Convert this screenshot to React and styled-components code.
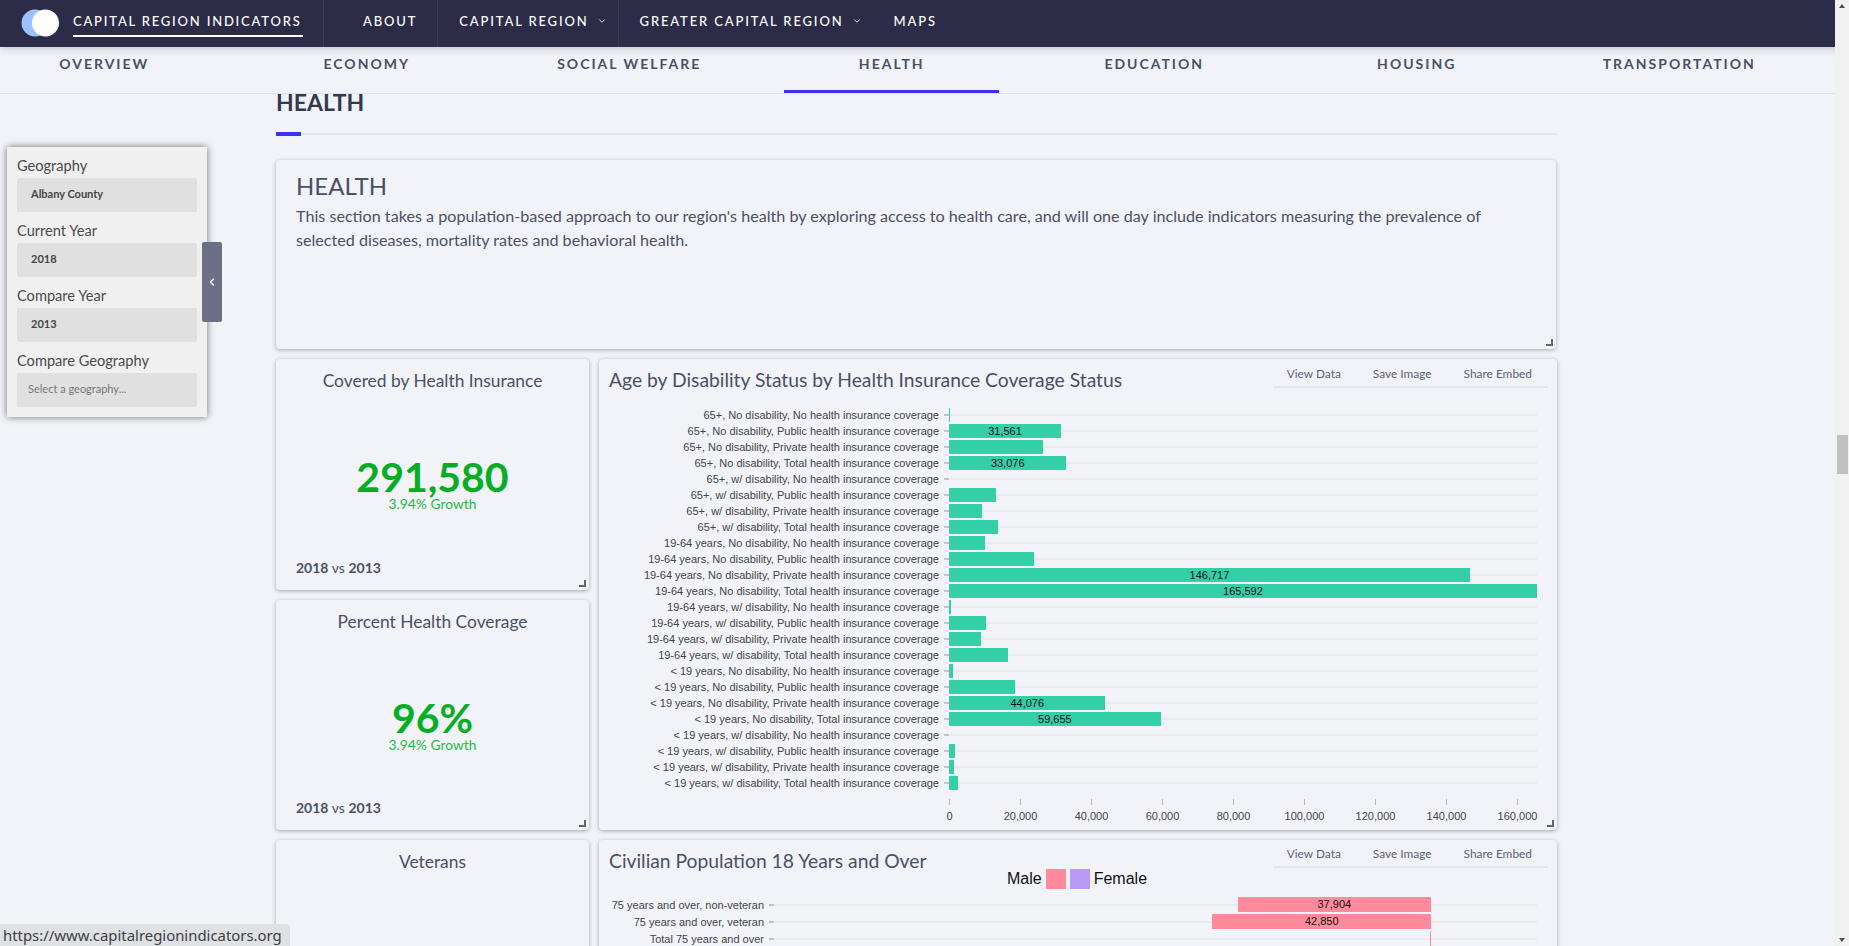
import styled, { createGlobalStyle } from "styled-components";
import { ChevronDown, ChevronLeft } from "lucide-react";

const GlobalStyle = createGlobalStyle`
  html, body {
    margin: 0;
    padding: 0;
    height: 100%;
    overflow: hidden;
    background: #f1f3f9;
    font-family: Lato, "Open Sans", sans-serif;
  }
  * { box-sizing: border-box; }
`;

const Page = styled.div`
  position: relative;
  width: 1849px;
  height: 946px;
  overflow: hidden;
  display: flex;
  flex-direction: column;
  color: #4a5064;
`;

const TopNav = styled.nav`
  height: 47px;
  flex: none;
  display: flex;
  background: #2c2c48;
  color: #fff;
  position: relative;
  z-index: 3;
  box-shadow: 0 2px 8px rgba(0, 0, 0, 0.18);
`;

const Logo = styled.svg`
  width: 38px;
  height: 28px;
  margin: 9px 0 0 21px;
  flex: none;
`;

const Brand = styled.div`
  margin: 0 20px 0 14px;
  width: 230px;
  height: 37px;
  line-height: 43px;
  border-bottom: 2px solid #fff;
  font-size: 13px;
  font-weight: 500;
  letter-spacing: 1.8px;
  white-space: nowrap;
`;

const NavItem = styled.div`
  height: 47px;
  display: flex;
  align-items: center;
  gap: 8px;
  padding: 0 ${(p) => p.$right}px 5px ${(p) => p.$left}px;
  border-left: ${(p) => (p.$plain ? "none" : "1px solid rgba(255, 255, 255, 0.07)")};
  font-size: 13px;
  font-weight: 500;
  letter-spacing: 1.85px;
  white-space: nowrap;
`;

const SubNav = styled.div`
  height: 47px;
  flex: none;
  display: flex;
  margin-left: -27px;
  width: 1862px;
  overflow: hidden;
  border-bottom: 1px solid #dfe1e9;
`;

const Tab = styled.div`
  width: 215px;
  margin: 0 23.75px;
  height: 47px;
  flex: none;
  padding-top: 7px;
  line-height: 20px;
  text-align: center;
  font-size: 14px;
  font-weight: 700;
  letter-spacing: 2px;
  color: #4a5064;
  border-bottom: 4px solid ${(p) => (p.$active ? "#3a32f0" : "transparent")};
`;

const Main = styled.main`
  flex: 1;
  min-height: 0;
  overflow: hidden;
  padding-left: 276px;
`;

const Content = styled.div`
  width: 1281px;
`;

const SectionTitle = styled.h2`
  margin: 0;
  height: 16px;
  line-height: 16px;
  font-size: 23px;
  font-weight: 700;
  color: #34394f;
`;

const SectionRule = styled.div`
  height: 4px;
  margin: 22px 0 24px;
  background:
    linear-gradient(#3a32f0, #3a32f0) left top / 25px 4px no-repeat,
    linear-gradient(#e3e5ec, #e3e5ec) left 1px / 100% 2px no-repeat;
`;

const CardGrid = styled.div`
  display: grid;
  grid-template-columns: 313px 958px;
  grid-template-rows: 189px 231px 230px 200px;
  gap: 10px;
`;

const Card = styled.section`
  position: relative;
  background: #f1f3f9;
  border-radius: 4px;
  box-shadow: 0 1px 4px rgba(0, 0, 0, 0.32);

  &::after {
    content: "";
    position: absolute;
    right: 3px;
    bottom: 3px;
    width: 5px;
    height: 5px;
    border-right: 2px solid #666;
    border-bottom: 2px solid #666;
  }
`;

const IntroCard = styled(Card)`
  grid-column: 1 / 3;
  width: 1280px;
  padding: 12px 20px;
`;

const IntroTitle = styled.h3`
  margin: 0;
  font-size: 24px;
  line-height: 28px;
  font-weight: 400;
  color: #4a5064;
`;

const IntroText = styled.p`
  margin: 4px 0 0;
  font-size: 16.15px;
  line-height: 24px;
  color: #4a5064;
`;

const StatCard = styled(Card)`
  display: flex;
  flex-direction: column;
  align-items: center;
  text-align: center;
`;

const StatTitle = styled.h3`
  margin: 10px 0 0;
  font-size: 17.4px;
  line-height: 24px;
  font-weight: 400;
  color: #4a5064;
`;

const StatValue = styled.div`
  margin-top: 66px;
  font-size: 41px;
  line-height: 36px;
  font-weight: 700;
  color: #05ae22;
`;

const StatGrowth = styled.div`
  font-size: 13.8px;
  line-height: 18px;
  color: #1fbb3c;
`;

const StatFoot = styled.div`
  margin-top: auto;
  margin-bottom: 13px;
  align-self: flex-start;
  margin-left: 20px;
  font-size: 14px;
  line-height: 18px;
  color: #4a5064;

  b {
    font-weight: 700;
  }
`;

const ChartCard = styled(Card)`
  grid-column: 2;
  grid-row: ${(p) => p.$row};
  padding-top: 10px;
`;

const ChartTitle = styled.h3`
  position: absolute;
  left: 10px;
  top: 9px;
  margin: 0;
  font-size: 19.3px;
  line-height: 24px;
  font-weight: 400;
  color: #4a5064;
`;

const Toolbar = styled.div`
  display: flex;
  justify-content: flex-end;
  margin: 0 9px 0 auto;
  width: 275px;
  height: ${(p) => p.$h}px;
  border-bottom: 2px solid #e3e5ec;
  font-size: 11.9px;
  color: #5c6175;
`;

const ToolButton = styled.div`
  padding: 0 16px 9px;
  height: 100%;
  display: flex;
  align-items: center;
  white-space: nowrap;
`;

const ChartBody = styled.div`
  padding-top: ${(p) => p.$top}px;
`;

const ChartRow = styled.div`
  display: grid;
  grid-template-columns: ${(p) => p.$label}px 5px ${(p) => p.$track}px;
  height: ${(p) => p.$h}px;
  align-items: center;
  font-family: "Liberation Sans", Arial, sans-serif;
  font-size: 11px;
`;

const RowLabel = styled.div`
  text-align: right;
  padding-right: 5px;
  color: #444;
  white-space: nowrap;
`;

const RowTick = styled.div`
  height: 2px;
  background: #c4c4c8;
`;

const Track = styled.div`
  display: flex;
  align-items: center;
  height: 100%;
  background: linear-gradient(#e9e9ee, #e9e9ee) center / 100% 2px no-repeat;
`;

const Bar = styled.div`
  flex: none;
  height: ${(p) => p.$h}px;
  background: ${(p) => p.$color};
  color: #111;
  text-align: center;
  line-height: ${(p) => p.$h}px;
  font-size: 11px;
  overflow: hidden;
`;

const Axis = styled.div`
  display: flex;
  margin: 8px 0 0 ${(p) => p.$left}px;
  font-family: "Liberation Sans", Arial, sans-serif;
  font-size: 11px;
  color: #444;
`;

const AxisTick = styled.div`
  width: 71px;
  flex: none;
  text-align: center;

  &::before {
    content: "";
    display: block;
    width: 1px;
    height: 6px;
    margin: 0 auto 5px;
    background: #b8b8bc;
  }
`;

const Legend = styled.div`
  display: flex;
  align-items: center;
  gap: 4px;
  margin: 1px 0 0 408px;
  height: 20px;
  font-family: "Liberation Sans", Arial, sans-serif;
  font-size: 16px;
  color: #111;
`;

const Swatch = styled.span`
  width: 20px;
  height: 20px;
  background: ${(p) => p.$color};
`;

const Sidebar = styled.aside`
  position: absolute;
  left: 7px;
  top: 147px;
  width: 200px;
  padding: 0 10px 10px;
  background: #f0f0f0;
  box-shadow: 0 0 7px rgba(0, 0, 0, 0.55);
  z-index: 2;
`;

const FieldLabel = styled.div`
  padding: 8px 0 2px;
  line-height: 21px;
  font-size: 14.6px;
  color: #4a4a4a;
`;

const SelectBox = styled.div`
  height: 34px;
  line-height: 32px;
  padding-left: ${(p) => (p.$placeholder ? 11 : 14)}px;
  border-radius: 2px;
  background: #e0e0e0;
  font-size: 11px;
  font-weight: ${(p) => (p.$placeholder ? 400 : 700)};
  color: ${(p) => (p.$placeholder ? "#777" : "#444")};
`;

const SidebarToggle = styled.div`
  position: absolute;
  left: 195px;
  top: 95px;
  width: 20px;
  height: 80px;
  display: flex;
  align-items: center;
  justify-content: center;
  background: #6b7088;
  border-radius: 2px;
  color: #fff;
`;

const ScrollTrack = styled.div`
  position: absolute;
  right: 0;
  top: 0;
  bottom: 0;
  width: 14px;
  background: #f1f1f1;
  z-index: 4;
`;

const ScrollThumb = styled.div`
  position: absolute;
  top: 435px;
  left: 2px;
  width: 11px;
  height: 39px;
  background: #c1c1c1;
`;

const ScrollArrow = styled.div`
  position: absolute;
  left: 4px;
  ${(p) => (p.$down ? "bottom: 4px;" : "top: 4px;")}
  width: 0;
  height: 0;
  border-left: 3.5px solid transparent;
  border-right: 3.5px solid transparent;
  ${(p) => (p.$down ? "border-top" : "border-bottom")}: 4px solid #505050;
`;

const StatusBubble = styled.div`
  position: absolute;
  left: 0;
  bottom: 0;
  width: 290px;
  height: 22px;
  padding-left: 3px;
  line-height: 22px;
  background: #dfe1e5;
  border-top-right-radius: 4px;
  font-family: "Noto Sans", sans-serif;
  font-size: 14.9px;
  color: #3c4043;
  white-space: nowrap;
  z-index: 5;
`;

const navItems = [
  { label: "ABOUT", left: 39, right: 20 },
  { label: "CAPITAL REGION", left: 21, right: 11, menu: true },
  { label: "GREATER CAPITAL REGION", left: 21, right: 11, menu: true },
  { label: "MAPS", left: 21, right: 20, plain: true },
];

const tabs = ["OVERVIEW", "ECONOMY", "SOCIAL WELFARE", "HEALTH", "EDUCATION", "HOUSING", "TRANSPORTATION"];

const coverage = ["No health insurance coverage", "Public health insurance coverage", "Private health insurance coverage", "Total health insurance coverage"];

const ageValues = [
  ["65+, No disability", [400, 31561, 26600, 33076]],
  ["65+, w/ disability", [0, 13300, 9300, 13700]],
  ["19-64 years, No disability", [10000, 24000, 146717, 165592]],
  ["19-64 years, w/ disability", [600, 10300, 9000, 16700]],
  ["< 19 years, No disability", [1100, 18700, 44076, 59655]],
  ["< 19 years, w/ disability", [0, 1700, 1500, 2600]],
];

const ageRows = ageValues.flatMap(([group, values]) =>
  values.map((value, i) => ({
    // the source chart really does drop "health" from this one label
    label:
      group === "< 19 years, No disability" && i === 3
        ? `${group}, Total insurance coverage`
        : `${group}, ${coverage[i]}`,
    value,
  }))
);

const ticks = [0, 20000, 40000, 60000, 80000, 100000, 120000, 140000, 160000];

const veteranRows = [
  { label: "75 years and over, non-veteran", value: 37904 },
  { label: "75 years and over, veteran", value: 42850 },
  { label: "Total 75 years and over", value: 200, hide: true },
];

const ChartTools = ({ height }) => (
  <Toolbar $h={height}>
    <ToolButton>View Data</ToolButton>
    <ToolButton>Save Image</ToolButton>
    <ToolButton>Share Embed</ToolButton>
  </Toolbar>
);

const Stat = ({ title, value }) => (
  <StatCard>
    <StatTitle>{title}</StatTitle>
    <StatValue>{value}</StatValue>
    <StatGrowth>3.94% Growth</StatGrowth>
    <StatFoot>
      <b>2018</b> vs <b>2013</b>
    </StatFoot>
  </StatCard>
);

export default function App() {
  return (
    <Page>
      <GlobalStyle />
      <TopNav>
        <Logo viewBox="0 0 38 28">
          <circle cx="14" cy="14" r="13.5" fill="#9cc3ff" />
          <circle cx="24.5" cy="14" r="13.5" fill="#fff" />
        </Logo>
        <Brand>CAPITAL REGION INDICATORS</Brand>
        {navItems.map((item) => (
          <NavItem key={item.label} $left={item.left} $right={item.right} $plain={item.plain}>
            {item.label}
            {item.menu && <ChevronDown size={10} strokeWidth={2} />}
          </NavItem>
        ))}
      </TopNav>
      <SubNav>
        {tabs.map((tab) => (
          <Tab key={tab} $active={tab === "HEALTH"}>
            {tab}
          </Tab>
        ))}
      </SubNav>
      <Main>
        <Content>
          <SectionTitle>HEALTH</SectionTitle>
          <SectionRule />
          <CardGrid>
            <IntroCard>
              <IntroTitle>HEALTH</IntroTitle>
              <IntroText>
                This section takes a population-based approach to our region's health by exploring access to health care, and will one day include indicators measuring the prevalence of selected diseases, mortality rates and behavioral health.
              </IntroText>
            </IntroCard>
            <Stat title="Covered by Health Insurance" value="291,580" />
            <ChartCard $row="2 / 4">
              <ChartTitle>Age by Disability Status by Health Insurance Coverage Status</ChartTitle>
              <ChartTools height={19} />
              <ChartBody $top={19}>
                {ageRows.map((row) => (
                  <ChartRow key={row.label} $label={345} $track={588} $h={16}>
                    <RowLabel>{row.label}</RowLabel>
                    <RowTick />
                    <Track>
                      <Bar $h={14} $color="#33cfa7" style={{ width: row.value * 0.00355 }}>
                        {row.value > 30000 && row.value.toLocaleString("en-US")}
                      </Bar>
                    </Track>
                  </ChartRow>
                ))}
                <Axis $left={315}>
                  {ticks.map((tick) => (
                    <AxisTick key={tick}>{tick.toLocaleString("en-US")}</AxisTick>
                  ))}
                </Axis>
              </ChartBody>
            </ChartCard>
            <Stat title="Percent Health Coverage" value="96%" />
            <StatCard>
              <StatTitle>Veterans</StatTitle>
            </StatCard>
            <ChartCard $row="4">
              <ChartTitle>Civilian Population 18 Years and Over</ChartTitle>
              <ChartTools height={18} />
              <Legend>
                Male
                <Swatch $color="#ff8a9b" />
                <Swatch $color="#bb99f7" />
                Female
              </Legend>
              <ChartBody $top={7}>
                {veteranRows.map((row) => (
                  <ChartRow key={row.label} $label={170} $track={763} $h={17}>
                    <RowLabel>{row.label}</RowLabel>
                    <RowTick />
                    <Track>
                      <Bar $h={15} $color="#ff8a9b" style={{ marginLeft: 657 - row.value * 0.0051, width: row.value * 0.0051 }}>
                        {!row.hide && row.value.toLocaleString("en-US")}
                      </Bar>
                    </Track>
                  </ChartRow>
                ))}
              </ChartBody>
            </ChartCard>
          </CardGrid>
        </Content>
      </Main>
      <Sidebar>
        <FieldLabel>Geography</FieldLabel>
        <SelectBox>Albany County</SelectBox>
        <FieldLabel>Current Year</FieldLabel>
        <SelectBox>2018</SelectBox>
        <FieldLabel>Compare Year</FieldLabel>
        <SelectBox>2013</SelectBox>
        <FieldLabel>Compare Geography</FieldLabel>
        <SelectBox $placeholder>Select a geography...</SelectBox>
        <SidebarToggle>
          <ChevronLeft size={12} strokeWidth={2.5} />
        </SidebarToggle>
      </Sidebar>
      <ScrollTrack>
        <ScrollArrow />
        <ScrollThumb />
        <ScrollArrow $down />
      </ScrollTrack>
      <StatusBubble>https://www.capitalregionindicators.org</StatusBubble>
    </Page>
  );
}
